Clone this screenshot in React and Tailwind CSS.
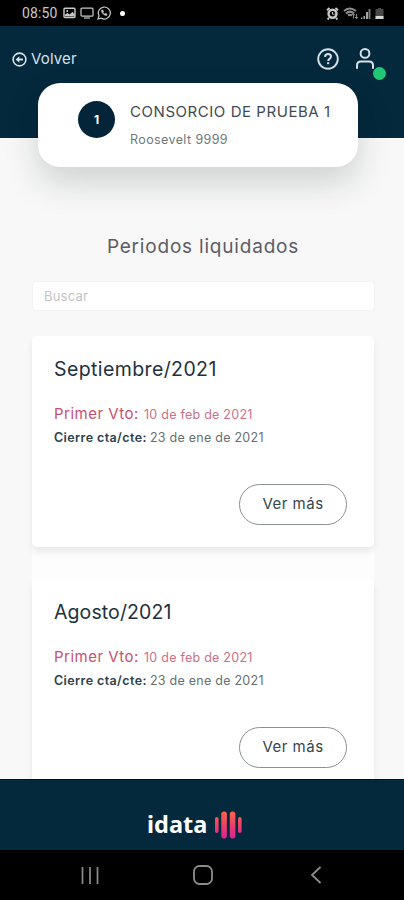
const periods = [
  { id: 1, name: "Septiembre/2021", tracking: "tracking-[0.4px]", due: "10 de feb de 2021", closing: "23 de ene de 2021" },
  { id: 2, name: "Agosto/2021", tracking: "tracking-[0.1px]", due: "10 de feb de 2021", closing: "23 de ene de 2021" },
];

function StatusBar() {
  return (
    <div className="flex h-[26px] shrink-0 items-center justify-between bg-black pl-[22px] pr-[20px] text-[#c9c9c9]">
      <div className="flex items-center">
        <span className="w-[41px] font-['Roboto'] text-[14px] leading-none tracking-[0.1px]">08:50</span>
        <svg width="13" height="12" viewBox="0 0 13 12" fill="none">
          <rect x="1" y="1.2" width="11" height="9.4" rx="1" stroke="currentColor" strokeWidth="1.4" />
          <path d="M2 9.5V7.5L4.5 6L6.5 7.5L9.5 5L11.5 7V9.5Z" fill="currentColor" />
          <circle cx="4.2" cy="3.9" r="1" fill="currentColor" />
        </svg>
        <svg className="ml-[4px]" width="14" height="12" viewBox="0 0 14 12" fill="none" stroke="currentColor" strokeWidth="1.2">
          <rect x="1" y="1.2" width="12" height="8" rx="1" />
          <path d="M4 11H10" />
        </svg>
        <svg className="ml-[3px]" width="14" height="14" viewBox="0 0 14 14" fill="none" stroke="currentColor">
          <path d="M1 13L2 9.8A6 6 0 1 1 4.3 12.2Z" strokeWidth="1.2" />
          <path d="M4.7 4.2C4.3 6.6 7 9.5 9.8 9.3L10 8.3L8.6 7.4L7.6 8.1C6.8 7.7 6.2 7.1 5.9 6.4L6.4 5.6L5.8 4.1Z" fill="currentColor" strokeWidth="0.8" />
        </svg>
        <span className="ml-[9px] size-[5px] rounded-full bg-white" />
      </div>
      <div className="flex items-center">
        <svg width="13" height="13" viewBox="0 0 13 13" fill="none">
          <path d="M1 3.2L3.6 1M12 3.2L9.4 1M3 11L1.6 12.4M10 11L11.4 12.4" stroke="currentColor" strokeWidth="2" />
          <circle cx="6.5" cy="6.8" r="5.2" fill="currentColor" />
          <circle cx="6.5" cy="6.8" r="2.7" fill="#000" />
          <path d="M6.5 5V7.2H8.5" stroke="currentColor" />
        </svg>
        <svg className="ml-[4px]" width="16" height="13" viewBox="0 0 16 13" fill="none" stroke="#8f8f8f">
          <path d="M1 4Q6.5 -1 13 4M3 6.4Q7 2.8 11 6.4M5 8.6Q7 7 9 8.6" strokeWidth="2" />
          <path d="M10.5 11.5V7M9 8.4L10.5 6.8L12 8.4M13.5 7V11.5M12 10L13.5 11.6L15 10" strokeWidth="1" />
        </svg>
        <svg className="ml-[1px]" width="12" height="13" viewBox="0 0 12 13" fill="#a5a5a5">
          <path d="M1 10.5H2.5V12H1ZM3.5 9H5V12H3.5ZM6 5H8V12H6Z" />
          <path d="M8.5 2H10.5V12H8.5Z" fill="#777777" />
        </svg>
        <svg className="ml-[3px]" width="9" height="13" viewBox="0 0 9 13">
          <path d="M3 1H6V2H8.5V12H0.5V2H3Z" fill="#494949" />
          <path d="M0.5 9H8.5V12H0.5Z" fill="#d7d7d7" />
        </svg>
      </div>
    </div>
  );
}

function Header() {
  return (
    <header className="flex h-[112px] shrink-0 items-start justify-between bg-[#04283c] pl-[12px] pr-[17px] text-[#d6e1e8]">
      <button className="mt-[23px] flex items-center gap-[4px]">
        <svg width="15" height="15" viewBox="0 0 15 15" fill="none" stroke="currentColor">
          <circle cx="7.5" cy="7.5" r="6.4" strokeWidth="1.6" />
          <path d="M11 7.5H5" strokeWidth="1.9" />
          <path d="M7.4 4.3L3.6 7.5L7.4 10.7Z" fill="currentColor" stroke="none" />
        </svg>
        <span className="text-[15px] leading-5 tracking-[0.15px]">Volver</span>
      </button>
      <div className="flex">
        <svg className="mr-[15px] mt-[22px]" width="22" height="22" viewBox="0 0 22 22" fill="none" stroke="currentColor">
          <circle cx="11" cy="11" r="9.8" strokeWidth="1.9" />
          <path d="M8 8.8C8.2 6.9 9.4 6 11 6C12.7 6 14 7 14 8.6C14 10.8 11.2 10.9 11.2 13" strokeWidth="2" />
          <path d="M10.1 14.2H12.2V16.2H10.1Z" fill="currentColor" stroke="none" />
        </svg>
        <div className="relative h-[60px] w-[33px]">
          <svg className="mt-[21px]" width="22" height="24" viewBox="0 0 22 24" fill="none" stroke="currentColor" strokeWidth="2">
            <circle cx="11" cy="6.4" r="4.4" />
            <path d="M3 21.8V18.5Q3 14.6 7 14.6H15Q19 14.6 19 18.5V21.8" />
          </svg>
          <span className="absolute left-[19px] top-[41px] size-[13px] rounded-full bg-[#22c776]" />
        </div>
      </div>
    </header>
  );
}

function ConsortiumCard() {
  return (
    <div className="relative z-10 -mt-[55px] ml-[38px] flex h-[84px] w-[320px] shrink-0 rounded-[22px] bg-white pl-[40px] shadow-[0_16px_34px_rgba(10,30,30,0.17)]">
      <div className="mt-[18px] flex size-[37px] items-center justify-center rounded-full bg-[#04243a] text-[12px] font-bold text-white">
        1
      </div>
      <div className="ml-[15px] whitespace-nowrap pt-[19px]">
        <p className="text-[15px] leading-5 tracking-[0.55px] text-[#3f4b50]">CONSORCIO DE PRUEBA 1</p>
        <p className="mt-[8px] text-[12.5px] leading-5 tracking-[0.4px] text-[#6f797b]">Roosevelt 9999</p>
      </div>
    </div>
  );
}

function PeriodCard({ period }) {
  return (
    <article className="h-[211px] shrink-0 rounded-[5px] bg-white px-[22px] pt-[20px] shadow-[0_5px_7px_rgba(0,0,0,0.08)]">
      <h2 className={`text-[19.5px] leading-[26px] text-[#1c3140] ${period.tracking}`}>{period.name}</h2>
      <p className="mt-[22px] flex items-baseline whitespace-nowrap leading-5 text-[#c9506f]">
        <span className="w-[90px] text-[15px] tracking-[0.5px]">Primer Vto:</span>
        <span className="text-[12.5px] tracking-[0.25px] text-[#cd7088]">{period.due}</span>
      </p>
      <p className="mt-[3px] flex items-baseline whitespace-nowrap leading-5">
        <span className="w-[96px] text-[12.5px] font-semibold tracking-[0.4px] text-[#2c414c]">Cierre cta/cte:</span>
        <span className="text-[12.5px] tracking-[0.25px] text-[#676f73]">{period.closing}</span>
      </p>
      <div className="mr-[5px] mt-[36px] flex justify-end">
        <button className="h-[41px] w-[108px] rounded-full border border-[#8a9092] text-[15px] tracking-[0.5px] text-[#33474c]">Ver más</button>
      </div>
    </article>
  );
}

function Footer() {
  return (
    <footer className="flex h-[71px] shrink-0 items-start border-t border-[#011521] bg-[#04283c] pl-[147px] pt-[30px]">
      <span className="w-[62px] font-['Noto_Sans'] text-[23.5px] font-bold leading-[28px] text-white">idata</span>
      <svg className="ml-[6px] mt-[1px]" width="28" height="28" viewBox="0 0 28 28">
        <defs>
          <linearGradient id="bars" x1="0" y1="0" x2="0" y2="28" gradientUnits="userSpaceOnUse">
            <stop offset="0" stopColor="#ff6549" />
            <stop offset="0.45" stopColor="#ed4566" />
            <stop offset="1" stopColor="#d81f9b" />
          </linearGradient>
        </defs>
        <g fill="url(#bars)">
          <rect x="0" y="6" width="3.6" height="16" rx="1.8" />
          <rect x="6.3" y="0.5" width="5.6" height="27" rx="2.8" />
          <rect x="14.8" y="0.5" width="5.6" height="27" rx="2.8" />
          <rect x="23" y="6" width="3.6" height="16" rx="1.8" />
        </g>
      </svg>
    </footer>
  );
}

function NavBar() {
  return (
    <nav className="flex h-[50px] shrink-0 items-center bg-black pl-[81px] text-[#8c8c8c]">
      <svg width="18" height="17" viewBox="0 0 18 17" stroke="currentColor" strokeWidth="1.7">
        <path d="M1.5 0V17M9 0V17M16.5 0V17" />
      </svg>
      <svg className="ml-[94px]" width="20" height="20" viewBox="0 0 20 20" fill="none" stroke="currentColor" strokeWidth="1.8">
        <rect x="1" y="1" width="18" height="18" rx="5.5" />
      </svg>
      <svg className="ml-[97px]" width="12" height="18" viewBox="0 0 12 18" fill="none" stroke="currentColor" strokeWidth="1.8">
        <path d="M10.5 1L2 9L10.5 17" />
      </svg>
    </nav>
  );
}

export default function App() {
  return (
    <div className="flex h-[900px] w-[404px] flex-col overflow-hidden bg-[#f8f8f8] font-['Inter',sans-serif]">
      <StatusBar />
      <Header />
      <ConsortiumCard />
      <main className="flex min-h-0 flex-1 flex-col overflow-hidden pl-[32px] pr-[30px]">
        <h1 className="mt-[67px] shrink-0 text-center text-[19px] leading-[26px] tracking-[0.8px] text-[#5c5c66]">
          Periodos liquidados
        </h1>
        <input
          className="mt-[21px] h-[30px] w-[343px] shrink-0 rounded-[4px] border border-[#f3f3f3] bg-white px-[11px] text-[13px] tracking-[0.2px] placeholder:text-[#c4c4c4]"
          placeholder="Buscar"
        />
        <section className="-mx-[10px] mt-[25px] flex min-h-0 flex-1 flex-col overflow-hidden px-[10px]">
          <div className="flex w-[342px] shrink-0 flex-col gap-[32px] rounded-[8px] bg-[#fdfdfd]">
            {periods.map((period) => (
              <PeriodCard key={period.id} period={period} />
            ))}
          </div>
        </section>
      </main>
      <Footer />
      <NavBar />
    </div>
  );
}
